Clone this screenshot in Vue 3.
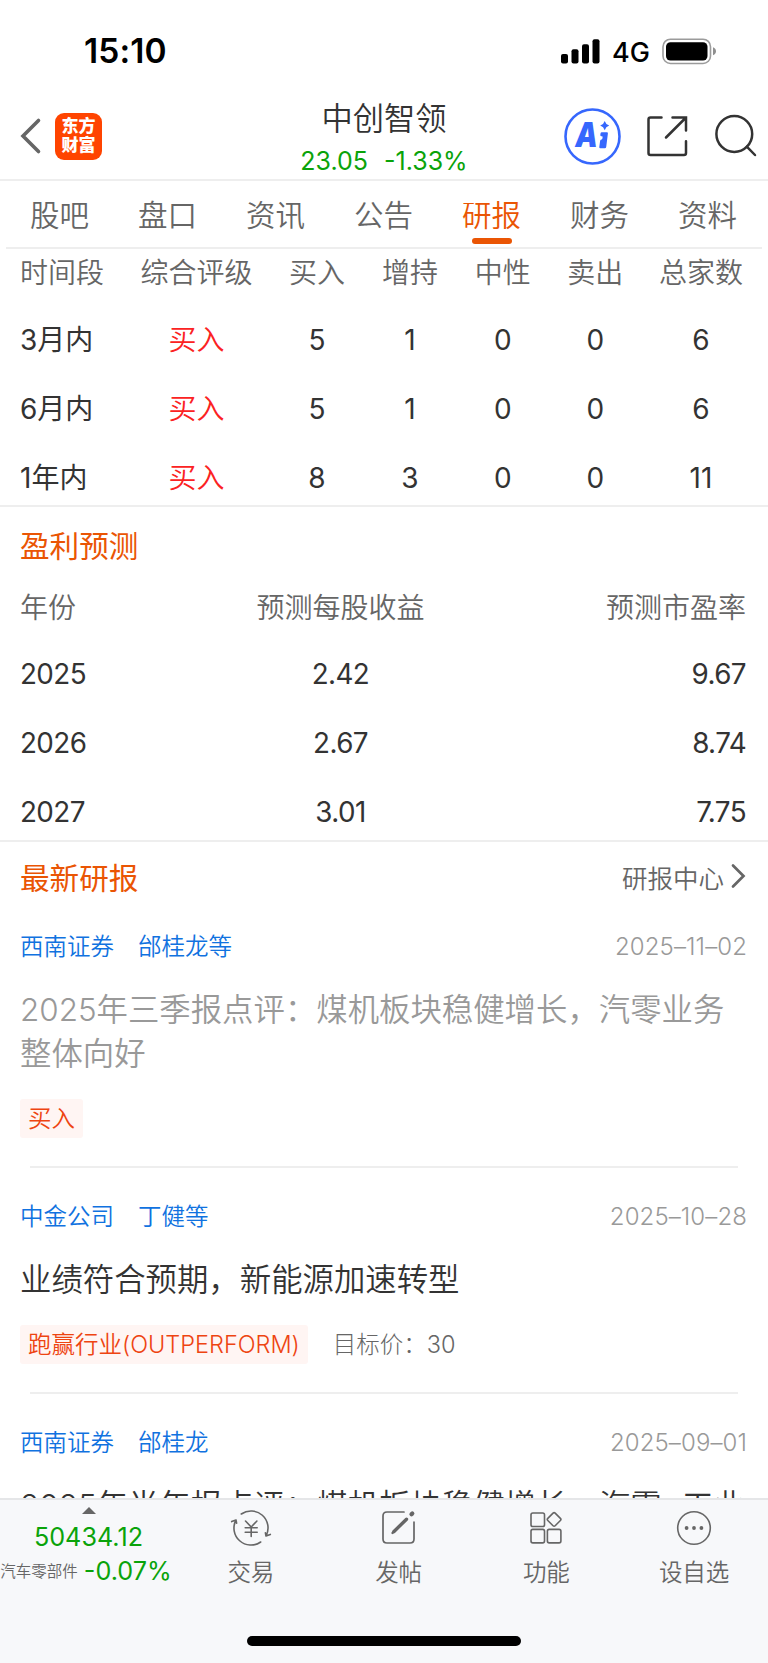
<template>
  <div class="page">
    <!-- barra de estado -->
    <div class="status">
      <span class="time">15:10</span>
      <div class="status-right">
        <svg class="signal" width="39" height="25" viewBox="0 0 39 25">
          <rect x="0" y="15" width="7" height="9.5" rx="2" />
          <rect x="10.5" y="10.3" width="7" height="14.2" rx="2" />
          <rect x="21" y="5.3" width="7" height="19.2" rx="2" />
          <rect x="31.5" y="0.3" width="7" height="24.2" rx="2" />
        </svg>
        <span class="net">4G</span>
        <svg width="55" height="27" viewBox="0 0 55 27">
          <rect x="1" y="1.2" width="47.5" height="24.3" rx="7.5" fill="none" stroke="#9b9b9b" stroke-width="1.6" />
          <rect x="4" y="4.2" width="41.5" height="18.4" rx="4.5" />
          <path d="M51 9.3c2.2.8 3 2.3 3 4s-.8 3.2-3 4z" fill="#8f8f8f" />
        </svg>
      </div>
    </div>

    <header class="header">
      <div class="header-left">
        <svg width="22" height="38" viewBox="0 0 22 38">
          <path d="M18.5 3.5 3 19l15.5 15.5" fill="none" stroke="#666" stroke-width="3.6" stroke-linecap="round" />
        </svg>
        <div class="logo"><span>东方</span><span>财富</span></div>
      </div>
      <div class="stock">
        <h1>中创智领</h1>
        <p><span>23.05</span><span>-1.33%</span></p>
      </div>
      <div class="header-right">
        <svg width="57" height="57" viewBox="0 0 57 57">
          <circle cx="28.5" cy="28.5" r="27" fill="none" stroke="#3667fd" stroke-width="2.6" />
          <text x="13.5" y="39.3" class="ai-text" transform="scale(.83 1)">A</text>
          <path d="M37.8 24.3h5.1q1.2 0 1 1.300l-1.7 13.400q-.2 1.200-1.400 1.200h-4.400q-1.300 0-1.100-1.300l.8-6q.2-1.200 1.200-1.400l.4-.1q.6-.1.7-.9l.2-1.300q.1-.8-.6-.9h-.8q-1.100-.1-.9-1.200l.2-1.600q.2-1.200 1.300-1.200z" fill="#3667fd" />
          <path d="M40.700 13q1 3.500 4.500 4.600-3.500 1.100-4.500 4.600-1-3.500-4.500-4.600Q39.700 16.500 40.700 13z" fill="#3667fd" />
        </svg>
        <svg class="share" width="42" height="42" viewBox="0 0 42 42" fill="none" stroke="#333" stroke-width="2.5" stroke-linecap="round">
          <path d="M15.500 2.500H4.500q-2 0-2 2v33.500q0 2 2 2h33.500q2 0 2-2V26.300" />
          <path d="M26.500 2.500H40v13M39.500 3 20 22.500" />
        </svg>
        <svg class="search" width="44" height="44" viewBox="0 0 44 44" fill="none" stroke="#333" stroke-width="2.5" stroke-linecap="round">
          <circle cx="20.3" cy="20" r="17.9" />
          <path d="M32.800 32.600 41 41" />
        </svg>
      </div>
    </header>

    <nav class="tabs">
      <span v-for="t in tabs" :key="t" class="tab" :class="{ active: t === tabActivo }" @click="tabActivo = t">{{ t }}</span>
    </nav>

    <main class="content">
      <section class="ratings">
        <div class="rating-row head">
          <span v-for="c in columnas" :key="c">{{ c }}</span>
        </div>
        <div v-for="r in ratings" :key="r[0]" class="rating-row">
          <span v-for="(v, i) in r" :key="i" :class="{ red: i === 1 }">{{ v }}</span>
        </div>
      </section>

      <section class="forecast">
        <h2>盈利预测</h2>
        <div class="forecast-row head"><span>年份</span><span>预测每股收益</span><span>预测市盈率</span></div>
        <div v-for="f in forecast" :key="f[0]" class="forecast-row">
          <span v-for="v in f" :key="v">{{ v }}</span>
        </div>
      </section>

      <section class="reports">
        <div class="reports-head">
          <h2>最新研报</h2>
          <span class="more">
            研报中心
            <svg width="15" height="26" viewBox="0 0 15 26">
              <path d="M2 2.500 12.500 13 2 23.500" fill="none" stroke="#666" stroke-width="2.7" stroke-linecap="round" />
            </svg>
          </span>
        </div>

        <article v-for="n in reports" :key="n.date" class="report">
          <div class="meta">
            <span class="org">{{ n.org }}</span>
            <span class="author">{{ n.author }}</span>
            <span class="date">{{ n.date }}</span>
          </div>
          <h3 :class="{ read: n.read }">{{ n.title }}</h3>
          <div v-if="n.tag" class="tags">
            <span class="tag">{{ n.tag }}</span>
            <span v-if="n.target" class="target">目标价：{{ n.target }}</span>
          </div>
        </article>
      </section>
    </main>

    <footer class="bottom">
      <div class="bar">
        <div class="index">
          <i class="arrow"></i>
          <span class="index-value">50434.12</span>
          <p><small>汽车零部件</small><span>-0.07%</span></p>
        </div>
        <div class="action">
          <svg width="42" height="38" viewBox="0 0 42 38" fill="none" stroke="#666" stroke-width="1.6" stroke-linecap="round" stroke-linejoin="round">
            <path d="M11.300 5A17 17 0 0 1 36 27l4.300-1.600M36 27l-.6-3.200" />
            <path d="M30.700 33A17 17 0 0 1 6 11l-4.300 1.600M6 11l.6 3.200" />
            <path d="m15.500 12 5.700 6 5.700-6M21.200 18v9.500M15.200 18.800h12M15.200 23.300h12" />
          </svg>
          <span>交易</span>
        </div>
        <div class="action">
          <svg width="38" height="38" viewBox="0 0 38 38" fill="none" stroke="#666" stroke-width="1.7" stroke-linecap="round">
            <path d="M24 3H7Q3 3 3 7v23q0 4 4 4h23q4 0 4-4V13" />
            <path d="m14 22.500 12.500-12.300" stroke-width="3.4" />
            <path d="m12.500 24 3.500-3.500" stroke-width="2.4" />
            <path d="m31.500 5.300.8-.8" stroke-width="4.2" />
          </svg>
          <span>发帖</span>
        </div>
        <div class="action">
          <svg width="38" height="38" viewBox="0 0 38 38" fill="none" stroke="#666" stroke-width="1.6">
            <rect x="4" y="4" width="13.5" height="13.5" rx="1.8" />
            <rect x="4" y="20.4" width="13.5" height="13.5" rx="1.8" />
            <rect x="20.4" y="20.4" width="13.5" height="13.5" rx="1.8" />
            <rect x="21.9" y="5.2" width="10.4" height="10.4" rx="1.5" transform="rotate(45 27.1 10.4)" />
          </svg>
          <span>功能</span>
        </div>
        <div class="action">
          <svg width="38" height="38" viewBox="0 0 38 38">
            <circle cx="19" cy="19" r="16.3" fill="none" stroke="#666" stroke-width="1.6" />
            <circle cx="11.6" cy="19" r="1.9" fill="#666" />
            <circle cx="19" cy="19" r="1.9" fill="#666" />
            <circle cx="26.4" cy="19" r="1.9" fill="#666" />
          </svg>
          <span>设自选</span>
        </div>
      </div>
      <div class="home"></div>
    </footer>
  </div>
</template>

<script setup>
import { ref } from 'vue'

const tabs = ['股吧', '盘口', '资讯', '公告', '研报', '财务', '资料']
const tabActivo = ref('研报')

const columnas = ['时间段', '综合评级', '买入', '增持', '中性', '卖出', '总家数']
const ratings = [
  ['3月内', '买入', 5, 1, 0, 0, 6],
  ['6月内', '买入', 5, 1, 0, 0, 6],
  ['1年内', '买入', 8, 3, 0, 0, 11],
]

const forecast = [
  ['2025', '2.42', '9.67'],
  ['2026', '2.67', '8.74'],
  ['2027', '3.01', '7.75'],
]

const reports = [
  {
    org: '西南证券',
    author: '邰桂龙等',
    date: '2025–11–02',
    title: '2025年三季报点评：煤机板块稳健增长，汽零业务整体向好',
    tag: '买入',
    read: true,
  },
  {
    org: '中金公司',
    author: '丁健等',
    date: '2025–10–28',
    title: '业绩符合预期，新能源加速转型',
    tag: '跑赢行业(OUTPERFORM)',
    target: '30',
  },
  {
    org: '西南证券',
    author: '邰桂龙',
    date: '2025–09–01',
    title: '2025年半年报点评：煤机板块稳健增长，汽零+工业',
  },
]
</script>

<style>
body {
  margin: 0;
  background: #fff;
}
</style>

<style scoped>
.page {
  width: 768px;
  height: 1663px;
  display: flex;
  flex-direction: column;
  overflow: hidden;
  background: #fff;
  color: #333;
  font-family: Inter, "Noto Sans CJK SC", sans-serif;
  font-weight: 350;
}

h1,
h2,
h3,
p {
  margin: 0;
  font-weight: inherit;
}

svg {
  display: block;
  flex: none;
}

.status {
  display: flex;
  justify-content: space-between;
  align-items: center;
  height: 101px;
  padding: 1px 51px 0 84px;
  box-sizing: border-box;
  flex: none;
  color: #000;
}

.time {
  font-size: 33.5px;
  font-weight: 600;
  letter-spacing: 0.1px;
}

.status-right {
  display: flex;
  align-items: center;
}

.net {
  margin: 2px 12px 0 12px;
  font-size: 27px;
  font-weight: 500;
}

.header {
  display: grid;
  grid-template-columns: 1fr auto 1fr;
  align-items: start;
  height: 78px;
  padding: 0 10px 0 20px;
  border-bottom: 2px solid #eee;
  flex: none;
}

.header-left,
.header-right {
  display: flex;
  align-items: center;
  height: 70px;
}

.header-left {
  gap: 13px;
}

.header-right {
  justify-content: flex-end;
}

.logo {
  display: flex;
  flex-direction: column;
  justify-content: center;
  width: 47px;
  height: 47px;
  border-radius: 9px;
  background: #ff4400;
  color: #fff;
  text-align: center;
  font-size: 17px;
  font-weight: 900;
  line-height: 19.5px;
}

.stock {
  margin-left: -10px;
  text-align: center;
}

.stock h1 {
  font-size: 31.3px;
  line-height: 37px;
}

.stock p {
  display: flex;
  gap: 16px;
  color: #0aa30a;
  font-size: 25px;
  font-weight: 400;
  line-height: 46px;
}

.ai-text {
  font-size: 34px;
  font-weight: 900;
  font-style: italic;
  fill: #3667fd;
}

.share {
  margin-left: 25px;
}

.search {
  margin-left: 26px;
}

.tabs {
  display: flex;
  height: 66px;
  margin: 0 6px;
  border-bottom: 2px solid #eee;
  flex: none;
}

.tab {
  display: flex;
  flex-direction: column;
  align-items: center;
  flex: 1;
  margin-left: -1px;
  color: #666;
  font-size: 29.5px;
  line-height: 68px;
}

.active {
  color: #ea5504;
}

.active::after {
  content: "";
  width: 40px;
  height: 6px;
  margin-top: -11px;
  border-radius: 3px;
  background: #ea5504;
}

.content {
  flex: 1;
  min-height: 0;
  overflow: hidden;
}

.rating-row {
  display: grid;
  grid-template-columns: 122.5px 148px 93px 93px 92.5px 92.5px 119px;
  font-size: 28px;
  line-height: 69px;
  text-align: center;
}

.rating-row span:first-child {
  padding-left: 20px;
  text-align: left;
}

.rating-row.head {
  height: 57px;
  line-height: 48px;
}

.rating-row:not(.head),
.forecast-row:not(.head) {
  font-weight: 400;
}

.head {
  color: #666;
}

.rating-row .red {
  color: #fb2222;
  font-weight: 350;
}

.ratings {
  height: 256px;
  border-bottom: 2px solid #eee;
  overflow: hidden;
}

.forecast {
  height: 333px;
  border-bottom: 2px solid #eee;
  overflow: hidden;
}

h2 {
  color: #ea5504;
  font-size: 29.6px;
  font-weight: 400;
}

.forecast h2 {
  padding-left: 20px;
  line-height: 78px;
  height: 67px;
}

.forecast-row {
  display: grid;
  grid-template-columns: 200px 241px 1fr;
  padding: 0 22px 0 20px;
  font-size: 27.8px;
  line-height: 69px;
  letter-spacing: -0.6px;
}

.forecast-row.head {
  height: 66px;
  font-size: 28px;
  letter-spacing: 0;
}

.forecast-row span:nth-child(2) {
  text-align: center;
}

.forecast-row span:last-child {
  text-align: right;
}

.reports-head {
  display: flex;
  justify-content: space-between;
  align-items: center;
  height: 68px;
  padding: 0 22px 6px 20px;
}

.more {
  display: flex;
  align-items: center;
  gap: 7px;
  color: #666;
  font-size: 25.5px;
}

.report {
  padding: 7px 22px 0 20px;
  height: 219px;
}

.report:not(:last-child)::after {
  content: "";
  display: block;
  height: 2px;
  margin: 28px 8px 0 10px;
  background: #eee;
}

.report:first-of-type {
  height: 263px;
}

.meta {
  display: flex;
  font-size: 23.5px;
  line-height: 48px;
  color: #1072e0;
}

.author {
  margin-left: 24px;
}

.date {
  margin-left: auto;
  margin-right: -1px;
  color: #999;
  font-size: 24px;
  font-weight: 350;
  letter-spacing: 0.1px;
}

h3 {
  margin-top: 17px;
  font-size: 31.4px;
  line-height: 44px;
  white-space: nowrap;
}

.read {
  white-space: normal;
  color: #999;
}

.tags {
  display: flex;
  align-items: center;
  margin-top: 23px;
}

.tag {
  height: 39px;
  padding: 0 8px;
  border-radius: 3px;
  background: #fff5f3;
  color: #ee4411;
  font-size: 23.5px;
  line-height: 39px;
}

.target {
  margin-left: 25px;
  color: #666;
  font-size: 23.5px;
  font-weight: 300;
  line-height: 39px;
}

.bottom {
  height: 163px;
  border-top: 2px solid #e5e6e8;
  background: #f7f8fa;
  flex: none;
}

.bar {
  display: flex;
  height: 136px;
}

.index {
  display: flex;
  flex-direction: column;
  align-items: center;
  width: 177px;
  color: #0aa30a;
  font-size: 25.2px;
  font-weight: 400;
  white-space: nowrap;
}

.arrow {
  margin-top: 7px;
  border: 7px solid transparent;
  border-top: 0;
  border-bottom-color: #666;
}

.index-value {
  line-height: 46px;
}

.index p {
  display: flex;
  align-items: center;
  gap: 6px;
  line-height: 23px;
  margin-right: 5px;
}

.index small {
  color: #666;
  font-size: 15.5px;
  font-weight: 350;
}

.action {
  display: flex;
  flex-direction: column;
  align-items: center;
  flex: 1;
  padding-top: 9px;
  color: #666;
  font-size: 23.5px;
  line-height: 51px;
}

.home {
  width: 274px;
  height: 10px;
  margin: 0 auto;
  border-radius: 5px;
  background: #000;
}
</style>
